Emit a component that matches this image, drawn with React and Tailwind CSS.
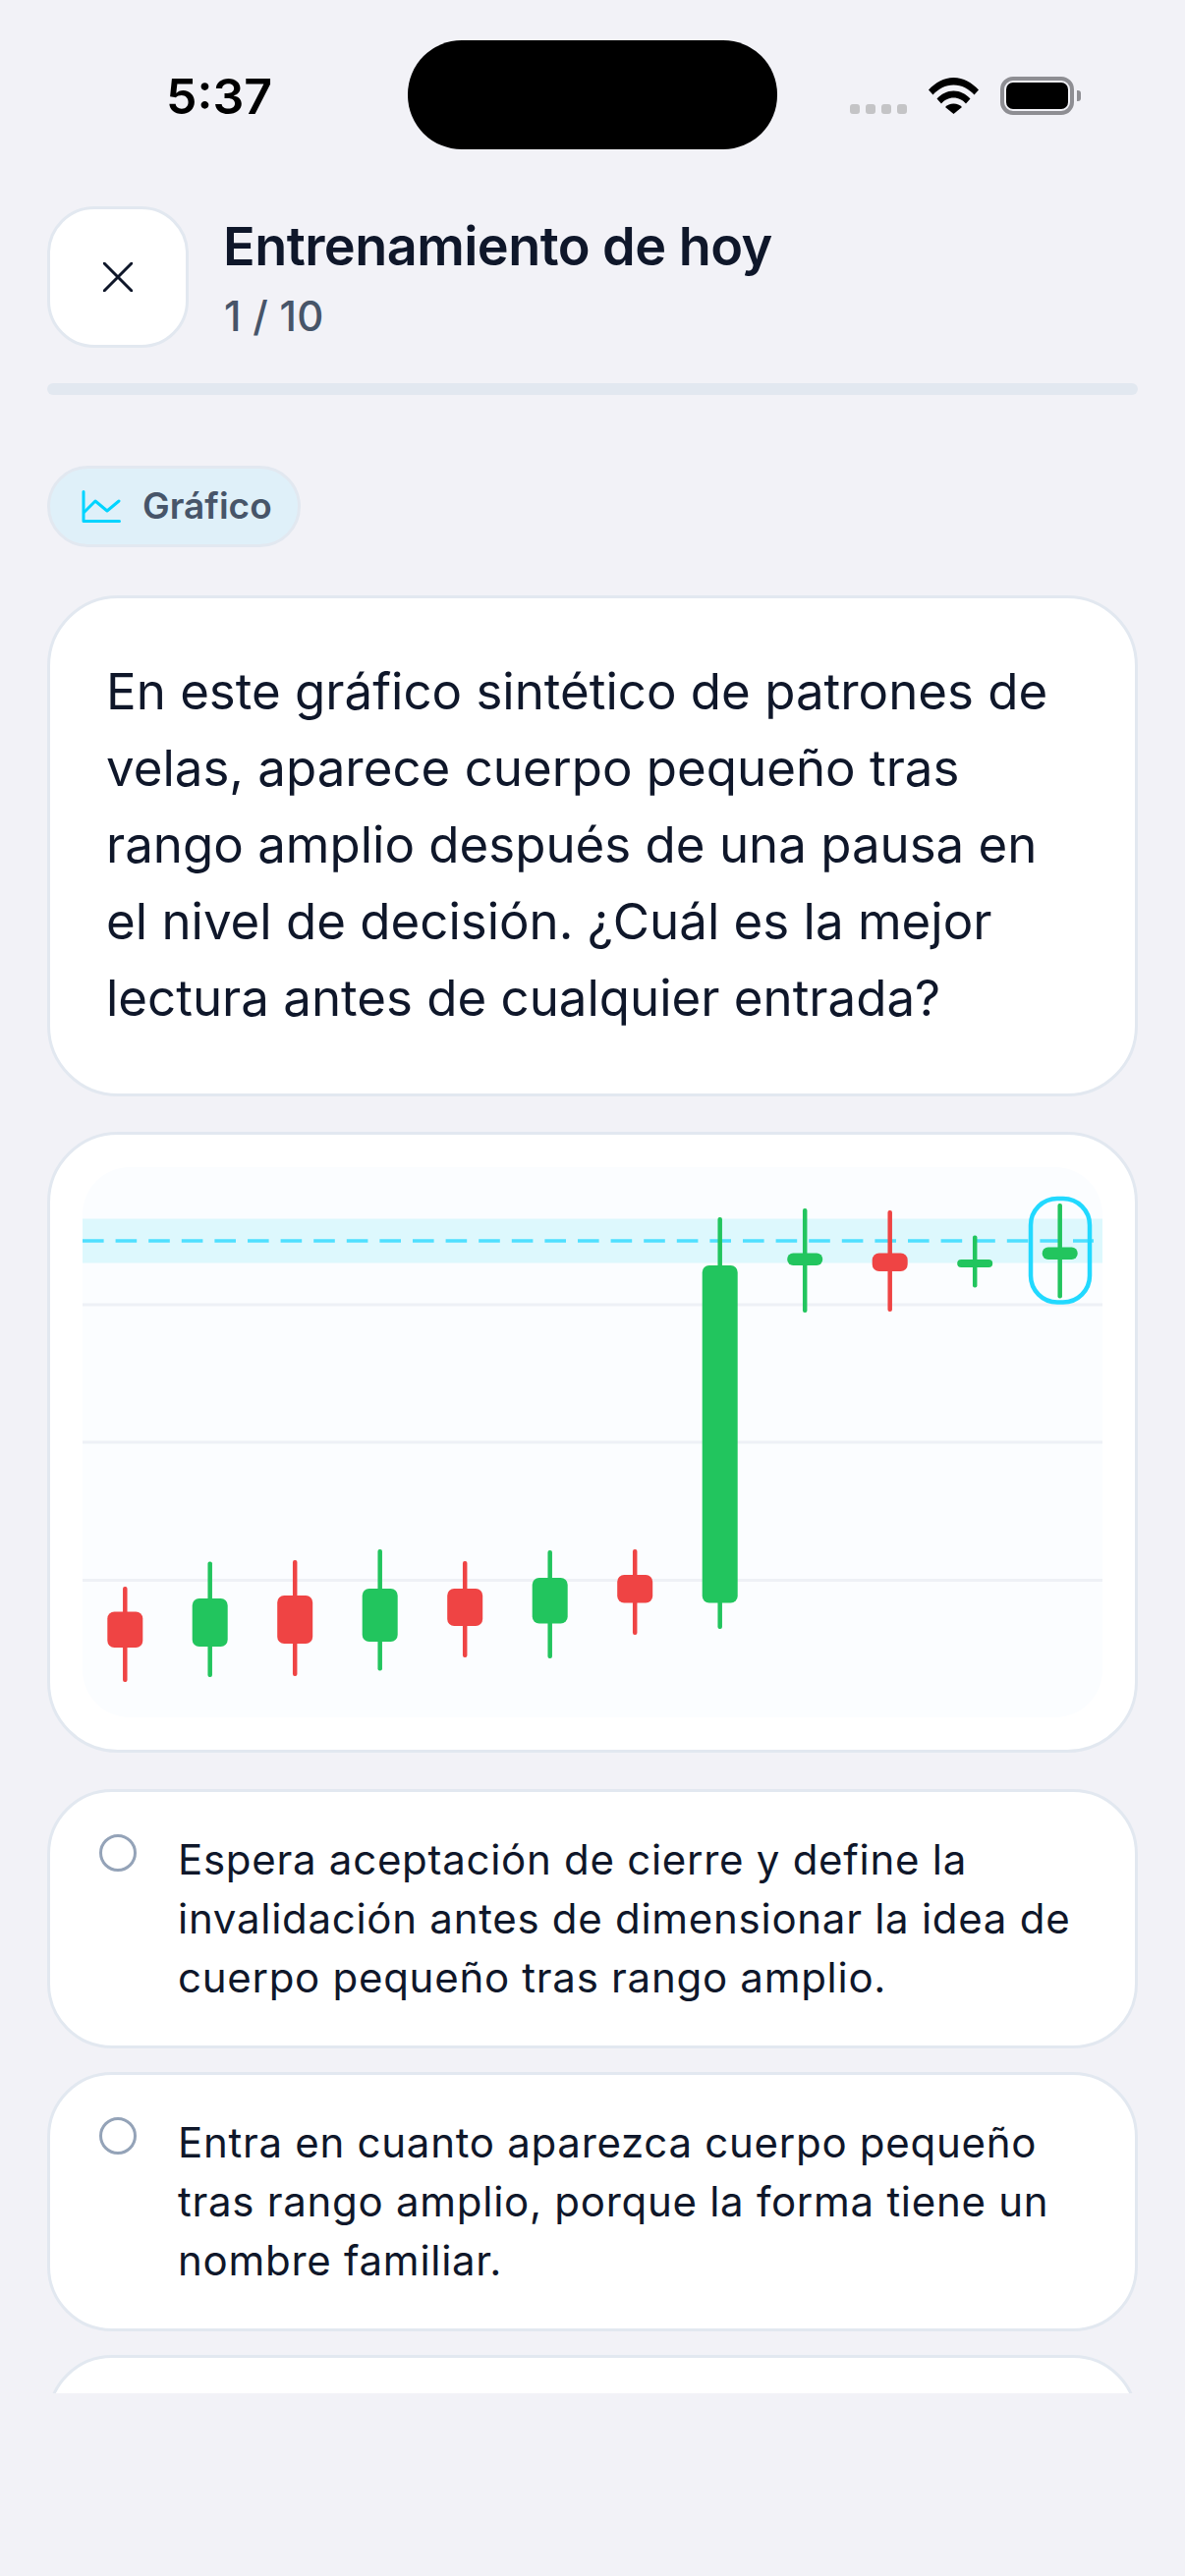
const candles = [
  { x: 127.3, wick: [1615, 1712], body: [1640.5, 1677], up: false, r: 7 },
  { x: 213.7, wick: [1589.5, 1707], body: [1627, 1676], up: true, r: 7 },
  { x: 300.2, wick: [1588, 1706], body: [1624, 1673], up: false, r: 7 },
  { x: 386.7, wick: [1577, 1700.5], body: [1617, 1671], up: true, r: 7 },
  { x: 473.2, wick: [1589, 1687], body: [1617, 1655], up: false, r: 7 },
  { x: 559.7, wick: [1578, 1688], body: [1606, 1652.5], up: true, r: 7 },
  { x: 646.2, wick: [1577, 1664], body: [1603, 1631.5], up: false, r: 7 },
  { x: 732.7, wick: [1239, 1658], body: [1288, 1631.5], up: true, r: 7 },
  { x: 819.2, wick: [1230, 1336], body: [1275.5, 1288], up: true, r: 6 },
  { x: 905.7, wick: [1232, 1335], body: [1275.5, 1294], up: false, r: 7 },
  { x: 992.2, wick: [1257.5, 1310.5], body: [1282, 1290], up: true, r: 4 },
  { x: 1078.7, wick: [1225, 1321.5], body: [1269.5, 1282], up: true, r: 6 },
];

// chart box sits at 84,1188 on the page
const CX = 84;
const CY = 1188;

const CandleChart = () => (
  <div className="rounded-[48px] bg-[#fbfdff] overflow-hidden h-[560px]">
    <svg width="1038" height="560" viewBox="0 0 1038 560" className="block">
      <rect x="0" y={1240.5 - CY} width="1038" height="45" fill="#ddf8fd" />
      {[1328, 1468, 1608.5].map((y) => (
        <line key={y} x1="0" x2="1038" y1={y - CY} y2={y - CY} stroke="#eef1f6" strokeWidth="3" />
      ))}
      <line
        x1="0"
        x2="1029"
        y1={1263 - CY}
        y2={1263 - CY}
        stroke="#4fdfff"
        strokeWidth="3.5"
        strokeDasharray="21.6 12"
      />
      {candles.map((c) => {
        const color = c.up ? "#22c55e" : "#ef4444";
        const top = Math.min(c.body[0], c.body[1]);
        const bottom = Math.max(c.body[0], c.body[1]);
        return (
          <g key={c.x}>
            <rect
              x={c.x - CX - 2.25}
              y={c.wick[0] - CY}
              width="4.5"
              height={c.wick[1] - c.wick[0]}
              rx="2"
              fill={color}
            />
            <rect
              x={c.x - CX - 18}
              y={top - CY}
              width="36"
              height={bottom - top}
              rx={c.r}
              fill={color}
            />
          </g>
        );
      })}
      <rect
        x={1049 - CX}
        y={1220 - CY}
        width="60"
        height="105.5"
        rx="27"
        fill="none"
        stroke="#22d9ff"
        strokeWidth="4.5"
      />
    </svg>
  </div>
);

const StatusBar = () => (
  <div className="relative h-[186px] shrink-0">
    <span className="absolute left-[169px] top-[68px] text-[50px] leading-[60px] font-semibold text-black">
      5:37
    </span>
    <div className="absolute left-[415px] top-[41px] w-[376px] h-[111px] rounded-[55px] bg-black" />
    <div className="absolute left-[865px] top-[106px] flex gap-[6px]">
      <div className="w-[10px] h-[10px] rounded-[3px] bg-[#c4c4c6]" />
      <div className="w-[10px] h-[10px] rounded-[3px] bg-[#c4c4c6]" />
      <div className="w-[10px] h-[10px] rounded-[3px] bg-[#c4c4c6]" />
      <div className="w-[10px] h-[10px] rounded-[3px] bg-[#c4c4c6]" />
    </div>
    <svg className="absolute left-[945px] top-[79px]" width="51" height="37" viewBox="0 0 51 37">
      <path d="M0 12.5C7 5 15.5 0 25.5 0S44 5 51 12.5L46.5 17.5C41 11.5 34 7.5 25.5 7.5S10 11.5 4.5 17.5Z" fill="#000" />
      <path d="M8.5 21.5C13 16.5 19 13.5 25.5 13.5S38 16.5 42.5 21.5L38 26.5C35 23 30.5 20.5 25.5 20.5S16 23 13 26.5Z" fill="#000" />
      <path d="M17 30C19 27.8 22 26.5 25.5 26.5S32 27.8 34 30L25.5 37Z" fill="#000" />
    </svg>
    <div className="absolute left-[1018px] top-[78px] w-[75px] h-[39px] rounded-[13px] border-[4px] border-[#8e8e93] p-[2px]">
      <div className="w-full h-full rounded-[7px] bg-black" />
    </div>
    <div className="absolute left-[1096px] top-[92px] w-[4px] h-[11px] rounded-r-[3px] bg-[#8e8e93]" />
  </div>
);

const Option = ({ children }) => (
  <div className="flex gap-[41px] h-[264px] shrink-0 rounded-[66px] border-[3px] border-[#e2e8f0] bg-white pl-[50px] pr-[40px] pt-[43px]">
    <div className="w-[38px] h-[38px] shrink-0 rounded-full border-[3px] border-[#94a3b8] bg-white" />
    <p className="text-[42px] leading-[60px] text-[#0f172a] tracking-[0.72px] -mt-[4px] ml-[1px]">{children}</p>
  </div>
);

export default function App() {
  return (
    <div className="w-[1206px] h-[2622px] bg-[#f2f2f7] [font-family:Inter,sans-serif] overflow-hidden">
      <div className="h-[2436px] overflow-hidden flex flex-col">
        <StatusBar />

        <div className="flex flex-col px-[48px] pt-[24px]">
          <div className="flex items-center gap-[35px]">
            <button className="w-[144px] h-[144px] shrink-0 rounded-[48px] border-[3px] border-[#e2e8f0] bg-white flex items-center justify-center">
              <svg width="30" height="30" viewBox="0 0 30 30">
                <path d="M1 1L29 29M29 1L1 29" stroke="#0f172a" strokeWidth="3" strokeLinecap="round" />
              </svg>
            </button>
            <div className="flex flex-col pt-[3px]">
              <h1 className="text-[54px] leading-[66px] font-semibold text-[#0f172a] tracking-[-0.55px]">
                Entrenamiento de hoy
              </h1>
              <p className="text-[42px] leading-[54px] font-medium text-[#475569] tracking-[0.3px] mt-[11px] ml-[1px]">1 / 10</p>
            </div>
          </div>

          <div className="h-[12px] rounded-full bg-[#e2e8f0] mt-[36px]" />

          <div className="mt-[72px] self-start h-[83px] w-[258px] rounded-full border-[3px] border-[#e2e8f0] bg-[#dff0f9] flex items-center pl-[32px] gap-[22px]">
            <svg width="40" height="34" viewBox="0 0 40 34" className="shrink-0">
              <path d="M2 1.5V31.5H38.5" fill="none" stroke="#00d4ff" strokeWidth="3" strokeLinecap="round" strokeLinejoin="round" />
              <path d="M3 22L14 11L26 21L38 11" fill="none" stroke="#00d4ff" strokeWidth="3" strokeLinecap="round" strokeLinejoin="round" />
            </svg>
            <span className="text-[37px] leading-[44px] font-semibold text-[#475569] -mt-[2px]">Gráfico</span>
          </div>

          <div className="mt-[49px] rounded-[72px] border-[3px] border-[#e2e8f0] bg-white px-[57px] pt-[56px] pb-[58px]">
            <p className="text-[51px] leading-[78px] text-[#0f172a]">
              En este gráfico sintético de patrones de velas, aparece cuerpo pequeño tras rango amplio después de una pausa en el nivel de decisión. ¿Cuál es la mejor lectura antes de cualquier entrada?
            </p>
          </div>

          <div className="mt-[36px] rounded-[72px] border-[3px] border-[#e2e8f0] bg-white p-[33px]">
            <CandleChart />
          </div>

          <div className="mt-[37px] flex flex-col gap-[24px]">
            <Option>Espera aceptación de cierre y define la invalidación antes de dimensionar la idea de cuerpo pequeño tras rango amplio.</Option>
            <Option>Entra en cuanto aparezca cuerpo pequeño tras rango amplio, porque la forma tiene un nombre familiar.</Option>
            <div className="h-[264px] shrink-0 rounded-[66px] border-[3px] border-[#e2e8f0] bg-white" />
          </div>
        </div>
      </div>
    </div>
  );
}
